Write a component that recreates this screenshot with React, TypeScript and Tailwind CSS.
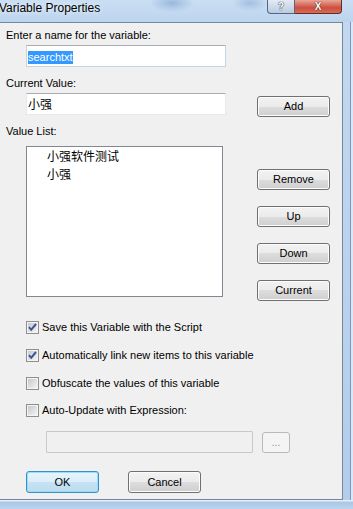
import React from 'react';

const font = "font-['Liberation_Sans','Noto_Sans_CJK_SC',sans-serif]";

const Btn = ({ label, className = '' }: { label: string; className?: string }) => (
    <button className={`w-[73px] h-[21px] flex-none rounded-[3px] border border-[#707070] bg-[linear-gradient(to_bottom,#f2f2f2_0%,#ebebeb_50%,#dddddd_50%,#cfcfcf_100%)] shadow-[inset_0_0_0_1px_#fcfcfc] text-[11px] leading-[19px] text-black text-center ${className}`}>
        {label}
    </button>
)

const CheckBox = ({ checked, label, className = '' }: { checked: boolean; label: string; className?: string }) => (
    <div className={`flex items-center h-[16px] ${className}`}>
        <svg width="13" height="13" viewBox="0 0 13 13" className="ml-[26px] flex-none">
            <defs>
                <linearGradient id="cbg" x1="0" y1="0" x2="1" y2="1">
                    <stop offset="0" stopColor="#c6c8cc" />
                    <stop offset="1" stopColor="#f4f4f4" />
                </linearGradient>
            </defs>
            <rect x="0.5" y="0.5" width="12" height="12" fill="#f4f4f4" stroke="#8e8f8f" />
            <rect x="2" y="2" width="9" height="9" fill="url(#cbg)" />
            {checked && <path d="M3 6.2 L5.2 8.8 L10 3" stroke="#3c5394" strokeWidth="2" fill="none" />}
        </svg>
        <span className="ml-[3px] text-[11px] leading-[16px] text-black">{label}</span>
    </div>
)

const App = () => {
    return (
        <div className={`w-[353px] h-[509px] overflow-hidden flex flex-col bg-[#c1d7ef] ${font}`}>
            {/* title bar */}
            <div className="h-[22px] flex-none flex items-start bg-[radial-gradient(22px_9px_at_172px_3px,#9ab8dc,transparent),radial-gradient(18px_8px_at_250px_3px,#a2bfe0,transparent),linear-gradient(to_bottom,#cbdff3,#bcd4ee)]">
                <span className="ml-[-1px] mt-[1px] text-[12px] leading-[14px] text-black [text-shadow:0_0_5px_#ffffff]">Variable Properties</span>
                <div className="ml-auto mr-[11px] flex">
                    <div className="w-[28px] h-[14px] rounded-bl-[4px] border border-t-0 border-[#56677d] bg-[linear-gradient(to_bottom,#e3ebf5,#b9cadf)] flex justify-center items-center">
                        <span className="text-[10px] leading-[11px] font-bold text-white [text-shadow:0_0_1px_#1e2b3c,0_0_1px_#1e2b3c]">?</span>
                    </div>
                    <div className="w-[47px] h-[14px] rounded-br-[4px] border border-t-0 border-l-0 border-[#6a2a22] bg-[linear-gradient(to_bottom,#e8a697,#cc4e3f_60%,#d76c58)] flex justify-center items-center">
                        <span className="text-[10px] leading-[11px] font-bold text-white [text-shadow:0_0_1px_#4a1a14,0_0_1px_#4a1a14]">X</span>
                    </div>
                </div>
            </div>

            <div className="flex h-[478px] flex-none">
                {/* client */}
                <div className="w-[343px] h-full flex-none bg-[#f0f0f0] border-t border-r border-b border-[#76879b] flex flex-col text-[11px] text-black">
                    <div className="flex">
                        <div className="w-[257px] flex flex-col">
                            <span className="mt-[5px] ml-[6px] leading-[14px]">Enter a name for the variable:</span>
                            <div className="mt-[3px] ml-[26px] w-[200px] h-[22px] bg-white border border-[#c5d3e2] border-t-[#abadb3] flex items-center pl-[1px] pt-[2px]">
                                <span className="bg-[#3399ff] text-white leading-[13px]">searchtxt</span>
                            </div>
                            <span className="mt-[9px] ml-[6px] leading-[14px]">Current Value:</span>
                            <div className="mt-[3px] ml-[26px] w-[200px] h-[22px] bg-white border border-[#e3e9ef] border-t-[#abadb3] flex items-center pl-[1px] pt-[1px]">
                                <span className="text-[12px] leading-[14px]">小强</span>
                            </div>
                            <span className="mt-[9px] ml-[6px] leading-[14px]">Value List:</span>
                            <div className="mt-[8px] ml-[26px] w-[197px] h-[151px] bg-white border border-[#828790] flex flex-col pt-[1px] pl-[20px]">
                                <span className="text-[12px] leading-[18px]">小强软件测试</span>
                                <span className="text-[12px] leading-[18px]">小强</span>
                            </div>
                        </div>
                        <div className="flex flex-col">
                            <Btn label="Add" className="mt-[73px]" />
                            <Btn label="Remove" className="mt-[52px]" />
                            <Btn label="Up" className="mt-[16px]" />
                            <Btn label="Down" className="mt-[16px]" />
                            <Btn label="Current" className="mt-[16px]" />
                        </div>
                    </div>

                    <CheckBox checked label="Save this Variable with the Script" className="mt-[18px]" />
                    <CheckBox checked label="Automatically link new items to this variable" className="mt-[12px]" />
                    <CheckBox checked={false} label="Obfuscate the values of this variable" className="mt-[12px]" />
                    <CheckBox checked={false} label="Auto-Update with Expression:" className="mt-[11px]" />

                    <div className="mt-[13px] ml-[46px] flex items-start">
                        <div className="w-[207px] h-[22px] bg-[#f0f0f0] border border-[#c9c9c9] rounded-[1px]" />
                        <div className="ml-[9px] mt-[1px] w-[28px] h-[21px] rounded-[3px] border border-[#b6babd] bg-[#f4f4f4] text-[#8d8d8d] text-[10px] leading-[19px] text-center">...</div>
                    </div>

                    <div className="mt-[18px] ml-[26px] flex">
                        <button className="w-[73px] h-[22px] rounded-[3px] border border-[#3392cc] bg-[linear-gradient(to_bottom,#e6f4fc_0%,#dbeef9_50%,#c7e3f3_50%,#bcdcef_100%)] shadow-[inset_0_0_0_1px_#9fdbf6] text-[11px] leading-[20px] text-black text-center">OK</button>
                        <Btn label="Cancel" className="ml-[29px] h-[22px] leading-[20px]" />
                    </div>
                </div>
                {/* right frame */}
                <div className="flex-1 bg-[linear-gradient(to_bottom,#c3d8f0,#b3cdea)] shadow-[inset_-2px_0_0_#d9e7f6,inset_-3px_0_0_#7a97bb]" />
            </div>
            {/* bottom frame */}
            <div className="flex-1 bg-[linear-gradient(to_bottom,#e6eef7_0px,#e6eef7_1px,#a9c6e8_2px,#bcd4ee_100%)]" />
        </div>
    )
}

export default App
